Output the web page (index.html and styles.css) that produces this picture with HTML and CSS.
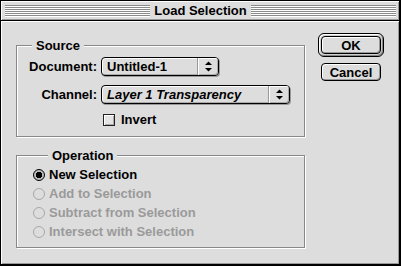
FILE: index.html
```html
<!DOCTYPE html>
<html lang="en">
<head>
    <meta charset="UTF-8">
    <title>Load Selection</title>
    <link rel="stylesheet" href="styles.css">
</head>
<body>
    <div class="window">
        <div class="titlebar">
            <span class="stripes"></span>
            <span class="title">Load Selection</span>
            <span class="stripes"></span>
        </div>
        <div class="content">
            <div class="groups">
                <fieldset class="group source">
                    <legend>Source</legend>
                    <div class="form-grid">
                        <label class="field-label">Document:</label>
                        <div class="popup doc">
                            <span class="popup-value">Untitled-1</span>
                            <span class="popup-arrows">
                                <svg width="7" height="11" viewBox="0 0 7 11"><polygon points="0,4 3.5,0.5 7,4" fill="#000"/><polygon points="0,7 7,7 3.5,10.5" fill="#000"/></svg>
                            </span>
                        </div>
                        <label class="field-label">Channel:</label>
                        <div class="popup channel">
                            <span class="popup-value italic">Layer 1 Transparency</span>
                            <span class="popup-arrows">
                                <svg width="7" height="11" viewBox="0 0 7 11"><polygon points="0,4 3.5,0.5 7,4" fill="#000"/><polygon points="0,7 7,7 3.5,10.5" fill="#000"/></svg>
                            </span>
                        </div>
                        <span></span>
                        <div class="check-row">
                            <span class="checkbox"></span>
                            <span>Invert</span>
                        </div>
                    </div>
                </fieldset>
                <fieldset class="group operation">
                    <legend>Operation</legend>
                    <div class="radio-row"><span class="radio checked"></span><span>New Selection</span></div>
                    <div class="radio-row disabled"><span class="radio"></span><span>Add to Selection</span></div>
                    <div class="radio-row disabled"><span class="radio"></span><span>Subtract from Selection</span></div>
                    <div class="radio-row disabled"><span class="radio"></span><span>Intersect with Selection</span></div>
                </fieldset>
            </div>
            <div class="buttons">
                <div class="default-ring"><button class="btn">OK</button></div>
                <button class="btn">Cancel</button>
            </div>
        </div>
    </div>
</body>
</html>
```

FILE: styles.css
```css
body {
    margin: 0;
    background-color: #dddddd;
    font-family: "Liberation Sans", Arial, sans-serif;
    font-size: 13px;
    font-weight: bold;
    color: #000;
}

.window {
    width: 401px;
    height: 266px;
    box-sizing: border-box;
    border: 1px solid #000;
    border-right-width: 2px;
    border-bottom-width: 2px;
    display: flex;
    flex-direction: column;
}

.titlebar {
    height: 20px;
    box-sizing: border-box;
    display: flex;
    align-items: center;
    padding: 0 3px 0 4px;
    background-color: #dddddd;
    border-bottom: 1px solid #000;
    box-shadow: inset 1px 1px 0 #fff, inset -1px -1px 0 #999;
}

.stripes {
    flex: 1;
    height: 12px;
    background: repeating-linear-gradient(to bottom, #8a8a8a 0 1px, #ffffff 1px 2px);
}

.title {
    padding: 0 4px 1px 4px;
    line-height: 15px;
}

.content {
    flex: 1;
    display: flex;
    align-items: flex-start;
    gap: 13px;
    padding: 12px 0 0 15px;
    box-shadow: inset 1px 1px 0 #fff, inset -1px -1px 0 #999;
}

.groups {
    width: 289px;
    margin-top: 5px;
}

.group {
    margin: 0;
    min-width: 0;
    padding: 0;
    border: 1px solid #888;
    box-shadow: inset 1px 1px 0 #fff, 1px 1px 0 #fff;
}

.group legend {
    margin-left: 15px;
    padding: 0 4px;
    line-height: 15px;
    background-color: #dddddd;
    position: relative;
}

.source {
    padding-bottom: 10px;
}

.operation {
    margin-top: 11px;
    padding: 2px 0 6px 16px;
}

.form-grid {
    display: grid;
    grid-template-columns: 80px auto;
    column-gap: 4px;
    row-gap: 9px;
    margin-top: 4px;
    align-items: center;
}

.field-label {
    text-align: right;
}

.popup {
    height: 19px;
    box-sizing: border-box;
    display: flex;
    border: 1px solid #000;
    border-radius: 4px;
    background-color: #dddddd;
    box-shadow: 1px 1px 0 #999, inset 1px 1px 0 #fff, inset -1px -1px 0 #aaa;
    overflow: hidden;
}

.doc {
    width: 118px;
}

.channel {
    width: 189px;
}

.popup-value {
    flex: 1;
    padding-left: 5px;
    line-height: 17px;
}

.italic {
    font-style: italic;
}

.popup-arrows {
    width: 20px;
    display: flex;
    align-items: center;
    justify-content: center;
    border-left: 1px solid #999;
    box-shadow: inset 1px 1px 0 #fff, inset -1px -1px 0 #aaa;
}

.check-row {
    display: flex;
    align-items: center;
    gap: 6px;
    margin-left: 2px;
    height: 13px;
}

.checkbox {
    width: 12px;
    height: 12px;
    box-sizing: border-box;
    border: 1px solid #222;
    background-color: #e4e4e4;
    box-shadow: inset 1px 1px 0 #fff, inset -1px -1px 0 #aaa;
}

.radio-row {
    display: flex;
    align-items: center;
    gap: 4px;
    height: 19px;
}

.radio {
    width: 12px;
    height: 12px;
    box-sizing: border-box;
    border-radius: 50%;
    border: 1px solid #000;
    background-color: #e4e4e4;
    box-shadow: inset 1px 1px 0 #fff, inset -1px -1px 0 #aaa;
}

.radio.checked {
    background: radial-gradient(circle, #000 0 3px, #bbb 3.5px);
    box-shadow: none;
}

.disabled {
    color: #9a9a9a;
}

.disabled .radio {
    border-color: #a8a8a8;
    background-color: #dddddd;
    box-shadow: none;
}

.buttons {
    display: flex;
    flex-direction: column;
    align-items: center;
    gap: 6px;
}

.default-ring {
    border: 1px solid #000;
    border-radius: 6px;
    padding: 2px;
    background-color: #cfcfcf;
    box-shadow: inset 1px 1px 0 #fff, inset -1px -1px 0 #888;
}

.btn {
    display: block;
    width: 60px;
    height: 18px;
    padding: 0;
    border: 1px solid #000;
    border-radius: 4px;
    background-color: #dddddd;
    box-shadow: inset 1px 1px 0 #fff, inset -1px -1px 0 #999;
    font-family: "Liberation Sans", Arial, sans-serif;
    font-size: 13px;
    font-weight: bold;
    color: #000;
    line-height: 15px;
}
```
